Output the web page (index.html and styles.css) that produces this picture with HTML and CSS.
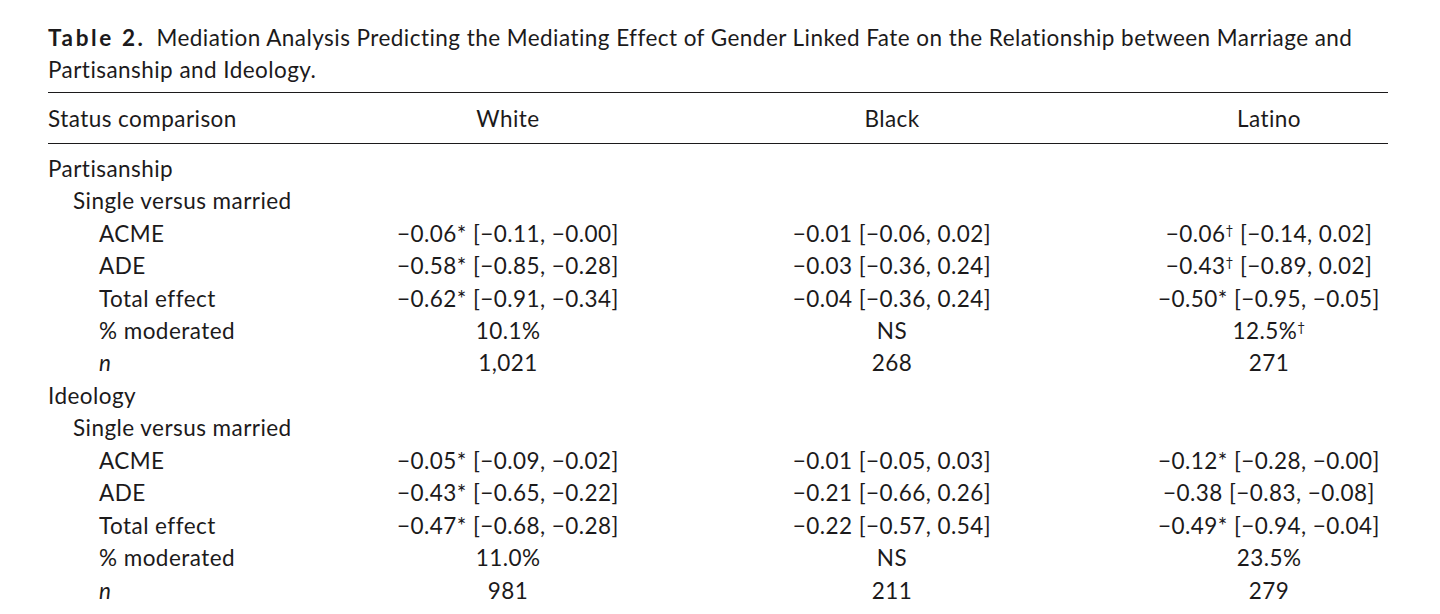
FILE: index.html
```html
<!DOCTYPE html>
<html lang="en">
<head>
<meta charset="utf-8">
<title>Table 2</title>
<link rel="stylesheet" href="styles.css">
</head>
<body>
<div class="page">
  <p class="caption"><span class="label">Table 2.</span>Mediation Analysis Predicting the Mediating Effect of Gender Linked Fate on the Relationship between Marriage and<br>Partisanship and Ideology.</p>
  <div class="table">
    <div class="row head">
      <div class="c-label">Status comparison</div>
      <div class="c-val">White</div>
      <div class="c-val">Black</div>
      <div class="c-val c-last">Latino</div>
    </div>
    <div class="tbody">
      <div class="row"><div class="c-label l0">Partisanship</div></div>
      <div class="row"><div class="c-label l1">Single versus married</div></div>
      <div class="row">
        <div class="c-label l2">ACME</div>
        <div class="c-val">−0.06* [−0.11, −0.00]</div>
        <div class="c-val">−0.01 [−0.06, 0.02]</div>
        <div class="c-val c-last">−0.06<sup>†</sup> [−0.14, 0.02]</div>
      </div>
      <div class="row">
        <div class="c-label l2">ADE</div>
        <div class="c-val">−0.58* [−0.85, −0.28]</div>
        <div class="c-val">−0.03 [−0.36, 0.24]</div>
        <div class="c-val c-last">−0.43<sup>†</sup> [−0.89, 0.02]</div>
      </div>
      <div class="row">
        <div class="c-label l2">Total effect</div>
        <div class="c-val">−0.62* [−0.91, −0.34]</div>
        <div class="c-val">−0.04 [−0.36, 0.24]</div>
        <div class="c-val c-last">−0.50* [−0.95, −0.05]</div>
      </div>
      <div class="row">
        <div class="c-label l2">% moderated</div>
        <div class="c-val">10.1%</div>
        <div class="c-val">NS</div>
        <div class="c-val c-last">12.5%<sup>†</sup></div>
      </div>
      <div class="row">
        <div class="c-label l2"><i>n</i></div>
        <div class="c-val">1,021</div>
        <div class="c-val">268</div>
        <div class="c-val c-last">271</div>
      </div>
      <div class="row"><div class="c-label l0">Ideology</div></div>
      <div class="row"><div class="c-label l1">Single versus married</div></div>
      <div class="row">
        <div class="c-label l2">ACME</div>
        <div class="c-val">−0.05* [−0.09, −0.02]</div>
        <div class="c-val">−0.01 [−0.05, 0.03]</div>
        <div class="c-val c-last">−0.12* [−0.28, −0.00]</div>
      </div>
      <div class="row">
        <div class="c-label l2">ADE</div>
        <div class="c-val">−0.43* [−0.65, −0.22]</div>
        <div class="c-val">−0.21 [−0.66, 0.26]</div>
        <div class="c-val c-last">−0.38 [−0.83, −0.08]</div>
      </div>
      <div class="row">
        <div class="c-label l2">Total effect</div>
        <div class="c-val">−0.47* [−0.68, −0.28]</div>
        <div class="c-val">−0.22 [−0.57, 0.54]</div>
        <div class="c-val c-last">−0.49* [−0.94, −0.04]</div>
      </div>
      <div class="row">
        <div class="c-label l2">% moderated</div>
        <div class="c-val">11.0%</div>
        <div class="c-val">NS</div>
        <div class="c-val c-last">23.5%</div>
      </div>
      <div class="row">
        <div class="c-label l2"><i>n</i></div>
        <div class="c-val">981</div>
        <div class="c-val">211</div>
        <div class="c-val c-last">279</div>
      </div>
    </div>
  </div>
</div>
</body>
</html>
```

FILE: styles.css
```css
html, body {
  margin: 0;
  padding: 0;
  background: #ffffff;
}

body {
  font-family: "Lato", "Open Sans", sans-serif;
  color: #1c1a1b;
  font-size: 22.5px;
  letter-spacing: 0.45px;
}

.page {
  padding: 22px 52px 0 48px;
}

.caption {
  margin: 0 0 6px 0;
  line-height: 32px;
}

.caption .label {
  font-weight: 700;
  letter-spacing: 2.6px;
  margin-right: 11px;
}

.table {
  border-top: 1.3px solid #1c1a1b;
}

.row {
  display: grid;
  grid-template-columns: 270px 380px 388px 1fr;
  align-items: center;
  height: 32.46px;
  white-space: nowrap;
}

.row.head {
  height: 50px;
  border-bottom: 1.3px solid #1c1a1b;
}

.tbody {
  padding-top: 8px;
}

.c-label.l0 { padding-left: 0; }
.c-label.l1 { padding-left: 25px; }
.c-label.l2 { padding-left: 51px; }

.c-val {
  text-align: center;
}

.c-last {
  padding-left: 64px;
}

sup {
  font-size: 0.6em;
  line-height: 0;
  vertical-align: 0.55em;
}

i {
  font-style: italic;
}
```
